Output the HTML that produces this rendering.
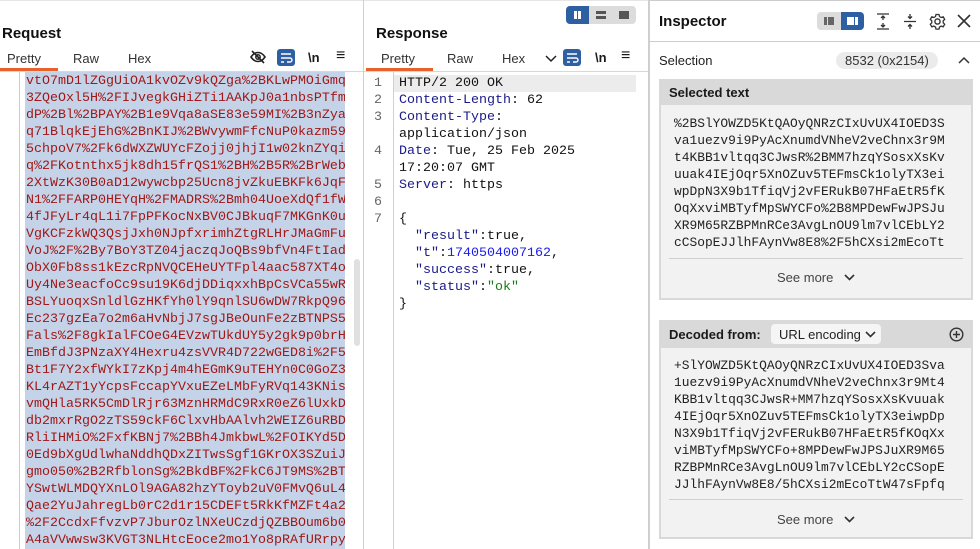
<!DOCTYPE html>
<html><head><meta charset="utf-8">
<style>
*{box-sizing:border-box;margin:0;padding:0}
body{width:980px;height:549px;overflow:hidden;background:#fff;font-family:"Liberation Sans","DejaVu Sans",sans-serif;position:relative;color:#1a1a1a}
.abs{position:absolute}
.title{font-weight:bold;font-size:15px;color:#111}
.tab{font-size:13px;color:#333;top:51px}
.mono{font-family:"Liberation Mono","DejaVu Sans Mono",monospace;font-size:13.33px;line-height:17px;white-space:pre}
.req{left:25px;top:72px;width:320px;background:#c5d3e8;color:#a01818;padding-left:1px;overflow:hidden;height:477px}
.resp{white-space:normal}
.resp div{height:17px;white-space:pre}
.k{color:#1a1a8a}
.sec{border:2px solid #d9d9d9;background:#f3f2f3}
.sechd{background:#d9d9d9;height:24px;font-size:13px;font-weight:bold;padding:4px 0 0 8px}
.seemore{font-size:13px;color:#444}
</style></head><body>
<div class="abs" style="left:0;top:0;width:980px;height:1px;background:#e6e6e6"></div>
<!-- request panel -->
<div class="abs title" style="left:2px;top:25px">Request</div>
<div class="abs tab" style="left:7px">Pretty</div>
<div class="abs tab" style="left:73px">Raw</div>
<div class="abs tab" style="left:128px">Hex</div>
<div class="abs" style="left:0;top:68px;width:58px;height:3px;background:#e8602c"></div>
<div class="abs" style="left:0;top:71px;width:363px;height:1px;background:#d8d8d8"></div>
<svg class="abs" style="left:249px;top:49px" width="18" height="16" viewBox="0 0 18 16"><path d="M2 8c2-3 4.5-4.5 7-4.5S14 5 16 8c-2 3-4.5 4.5-7 4.5S4 11 2 8z" fill="none" stroke="#222" stroke-width="1.6"/><circle cx="9" cy="8" r="2.2" fill="none" stroke="#222" stroke-width="1.5"/><path d="M3 2l12 12" stroke="#222" stroke-width="1.6"/></svg>
<div class="abs" style="left:277px;top:49px;width:18px;height:17px;background:#2f5fa3;border-radius:3px"></div>
<svg class="abs" style="left:277px;top:49px" width="18" height="17"><path d="M4 5h10M4 9h9a2 2 0 010 4h-3M4 13h3" stroke="#fff" stroke-width="1.4" fill="none"/></svg>
<div class="abs" style="left:308px;top:50px;font-size:13px;font-weight:bold">\n</div>
<div class="abs" style="left:336px;top:47px;font-size:16px">≡</div>
<div class="abs req mono"><div style="height:1px;overflow:hidden"> </div>vtO7mD1lZGgUiOA1kvOZv9kQZga%2BKLwPMOiGmq
3ZQeOxl5H%2FIJvegkGHiZTi1AAKpJ0a1nbsPTfm
dP%2Bl%2BPAY%2B1e9Vqa8aSE83e59MI%2B3nZya
q71BlqkEjEhG%2BnKIJ%2BWvywmFfcNuP0kazm59
5chpoV7%2Fk6dWXZWUYcFZojj0jhjI1w02knZYqi
q%2FKotnthx5jk8dh15frQS1%2BH%2B5R%2BrWeb
2XtWzK30B0aD12wywcbp25Ucn8jvZkuEBKFk6JqF
N1%2FFARP0HEYqH%2FMADRS%2Bmh04UoeXdQf1fW
4fJFyLr4qL1i7FpPFKocNxBV0CJBkuqF7MKGnK0u
VgKCFzkWQ3QsjJxh0NJpfxrimhZtgRLHrJMaGmFu
VoJ%2F%2By7BoY3TZ04jaczqJoQBs9bfVn4FtIad
ObX0Fb8ss1kEzcRpNVQCEHeUYTFpl4aac587XT4o
Uy4Ne3eacfoCc9su19K6djDDiqxxhBpCsVCa55wR
BSLYuoqxSnldlGzHKfYh0lY9qnlSU6wDW7RkpQ96
Ec237gzEa7o2m6aHvNbjJ7sgJBeOunFe2zBTNPS5
Fals%2F8gkIalFCOeG4EVzwTUkdUY5y2gk9p0brH
EmBfdJ3PNzaXY4Hexru4zsVVR4D722wGED8i%2F5
Bt1F7Y2xfWYkI7zKpj4m4hEGmK9uTEHYn0C0GoZ3
KL4rAZT1yYcpsFccapYVxuEZeLMbFyRVq143KNis
vmQHla5RK5CmDlRjr63MznHRMdC9RxR0eZ6lUxkD
db2mxrRgO2zTS59ckF6ClxvHbAAlvh2WEIZ6uRBD
RliIHMiO%2FxfKBNj7%2BBh4JmkbwL%2FOIKYd5D
0Ed9bXgUdlwhaNddhQDxZITwsSgf1GKrOX3SZuiJ
gmo050%2B2RfblonSg%2BkdBF%2FkC6JT9MS%2BT
YSwtWLMDQYXnLOl9AGA82hzYToyb2uV0FMvQ6uL4
Qae2YuJahregLb0rC2d1r15CDEFt5RkKfMZFt4a2
%2F2CcdxFfvzvP7JburOzlNXeUCzdjQZBBOum6b0
A4aVVwwsw3KVGT3NLHtcEoce2mo1Yo8pRAfURrpy</div>
<div class="abs" style="left:19px;top:72px;width:1px;height:477px;background:#ccc"></div>
<div class="abs" style="left:354px;top:259px;width:6px;height:87px;background:#e0e0e0;border-radius:3px"></div>
<div class="abs" style="left:363px;top:0;width:1px;height:549px;background:#d0d0d0"></div>
<!-- response panel -->
<div class="abs" style="left:566px;top:6px;width:70px;height:18px;background:#dcdcdc;border-radius:4px;overflow:hidden">
 <div style="position:absolute;left:0;top:0;width:23px;height:18px;background:#2f5fa3"></div>
 <div style="position:absolute;left:8px;top:5px;width:3px;height:8px;background:#fff"></div><div style="position:absolute;left:12px;top:5px;width:3px;height:8px;background:#fff"></div>
 <div style="position:absolute;left:30px;top:5px;width:10px;height:3px;background:#555"></div><div style="position:absolute;left:30px;top:10px;width:10px;height:3px;background:#555"></div>
 <div style="position:absolute;left:53px;top:5px;width:10px;height:8px;background:#555"></div>
</div>
<div class="abs title" style="left:376px;top:25px">Response</div>
<div class="abs tab" style="left:381px">Pretty</div>
<div class="abs tab" style="left:447px">Raw</div>
<div class="abs tab" style="left:502px">Hex</div>
<svg class="abs" style="left:545px;top:55px" width="12" height="8"><path d="M1 1l5 5 5-5" stroke="#222" stroke-width="1.5" fill="none"/></svg>
<div class="abs" style="left:563px;top:49px;width:18px;height:17px;background:#2f5fa3;border-radius:3px"></div>
<svg class="abs" style="left:563px;top:49px" width="18" height="17"><path d="M4 5h10M4 9h9a2 2 0 010 4h-3M4 13h3" stroke="#fff" stroke-width="1.4" fill="none"/></svg>
<div class="abs" style="left:595px;top:50px;font-size:13px;font-weight:bold">\n</div>
<div class="abs" style="left:621px;top:47px;font-size:16px">≡</div>
<div class="abs" style="left:366px;top:68px;width:67px;height:3px;background:#e8602c"></div>
<div class="abs" style="left:364px;top:71px;width:284px;height:1px;background:#d8d8d8"></div>
<div class="abs" style="left:393px;top:72px;width:1px;height:477px;background:#d0d0d0"></div>
<div class="abs" style="left:394px;top:75px;width:242px;height:17px;background:#ececec"></div>
<div class="abs mono resp" style="left:374px;top:75px;color:#666;width:14px"><div>1</div><div>2</div><div>3</div><div></div><div>4</div><div></div><div>5</div><div>6</div><div>7</div></div>
<div class="abs mono resp" style="left:399px;top:75px;color:#111"><div>HTTP/2 200 OK</div><div><span class="k">Content-Length</span>: 62</div><div><span class="k">Content-Type</span>:</div><div>application/json</div><div><span class="k">Date</span>: Tue, 25 Feb 2025</div><div>17:20:07 GMT</div><div><span class="k">Server</span>: https</div><div></div><div>{</div><div>  <span class="k">"result"</span>:true,</div><div>  <span class="k">"t"</span>:<span style="color:#1a1aee">1740504007162</span>,</div><div>  <span class="k">"success"</span>:true,</div><div>  <span class="k">"status"</span>:<span style="color:#1a7a1a">"ok"</span></div><div>}</div></div>
<div class="abs" style="left:648px;top:0;width:2px;height:549px;background:#cfcfcf"></div>
<!-- inspector -->
<div class="abs" style="left:650px;top:0;width:330px;height:1px;background:#ccc"></div>
<div class="abs title" style="left:659px;top:13px">Inspector</div>
<div class="abs" style="left:817px;top:12px;width:47px;height:18px;background:#dcdcdc;border-radius:4px;overflow:hidden">
 <div style="position:absolute;left:7px;top:5px;width:3px;height:8px;background:#666"></div><div style="position:absolute;left:11px;top:5px;width:6px;height:8px;background:#666"></div>
 <div style="position:absolute;left:24px;top:0;width:23px;height:18px;background:#2f5fa3"></div>
 <div style="position:absolute;left:30px;top:5px;width:7px;height:8px;background:#fff"></div><div style="position:absolute;left:38px;top:5px;width:3px;height:8px;background:#fff"></div>
</div>
<svg class="abs" style="left:876px;top:13px" width="14" height="17"><path d="M1 1h12M1 16h12M7 4v3M5 5l2-2 2 2M7 13v-3M5 12l2 2 2-2" stroke="#333" stroke-width="1.3" fill="none"/></svg>
<svg class="abs" style="left:903px;top:13px" width="14" height="17"><path d="M1 8.5h12M7 1v4M5 3.5l2 2 2-2M7 16v-4M5 13.5l2-2 2 2" stroke="#333" stroke-width="1.3" fill="none"/></svg>
<svg class="abs" style="left:929px;top:13px" width="17" height="17" viewBox="0 0 17 17"><circle cx="8.5" cy="8.5" r="2.6" fill="none" stroke="#333" stroke-width="1.4"/><path d="M7 1.5h3l.5 2 1.7 1 2-.7 1.5 2.6-1.5 1.4v2l1.5 1.4-1.5 2.6-2-.7-1.7 1-.5 2H7l-.5-2-1.7-1-2 .7-1.5-2.6 1.5-1.4v-2L1.3 6.4l1.5-2.6 2 .7 1.7-1z" fill="none" stroke="#333" stroke-width="1.3"/></svg>
<svg class="abs" style="left:957px;top:14px" width="14" height="14"><path d="M1 1l12 12M13 1L1 13" stroke="#333" stroke-width="1.6"/></svg>
<div class="abs" style="left:650px;top:41px;width:330px;height:1px;background:#ccc"></div>
<div class="abs" style="left:659px;top:53px;font-size:13px;color:#222">Selection</div>
<div class="abs" style="left:836px;top:52px;height:17px;padding:1px 9px;background:#ebebeb;border-radius:9px;font-size:13px;color:#333">8532 (0x2154)</div>
<svg class="abs" style="left:958px;top:56px" width="12" height="8"><path d="M1 7l5-5 5 5" stroke="#333" stroke-width="1.5" fill="none"/></svg>
<!-- selected text -->
<div class="abs sec" style="left:659px;top:79px;width:314px;height:221px">
 <div class="sechd">Selected text</div>
 <div class="mono" style="position:absolute;left:13px;top:34px;color:#222;font-size:12.9px">%2BSlYOWZD5KtQAOyQNRzCIxUvUX4IOED3S
va1uezv9i9PyAcXnumdVNheV2veChnx3r9M
t4KBB1vltqq3CJwsR%2BMM7hzqYSosxXsKv
uuak4IEjOqr5XnOZuv5TEFmsCk1olyTX3ei
wpDpN3X9b1TfiqVj2vFERukB07HFaEtR5fK
OqXxviMBTyfMpSWYCFo%2B8MPDewFwJPSJu
XR9M65RZBPMnRCe3AvgLnOU9lm7vlCEbLY2
cCSopEJJlhFAynVw8E8%2F5hCXsi2mEcoTt</div>
 <div style="position:absolute;left:8px;top:177px;width:294px;height:1px;background:#d0d0d0"></div>
 <div class="seemore" style="position:absolute;left:116px;top:189px">See more</div>
 <svg style="position:absolute;left:183px;top:193px" width="11" height="7"><path d="M1 1l4.5 4.5L10 1" stroke="#333" stroke-width="1.6" fill="none"/></svg>
</div>
<!-- decoded -->
<div class="abs sec" style="left:659px;top:320px;width:314px;height:219px">
 <div class="sechd" style="height:26px;padding-top:5px">Decoded from:</div>
 <div style="position:absolute;left:110px;top:2px;width:110px;height:20px;background:#f5f5f5;border-radius:4px;font-size:13px;padding:3px 0 0 8px;color:#222">URL encoding</div>
 <svg style="position:absolute;left:204px;top:9px" width="11" height="7"><path d="M1 1l4.5 4.5L10 1" stroke="#333" stroke-width="1.6" fill="none"/></svg>
 <svg style="position:absolute;left:288px;top:5px" width="15" height="15"><circle cx="7.5" cy="7.5" r="6.3" fill="none" stroke="#333" stroke-width="1.4"/><path d="M7.5 4v7M4 7.5h7" stroke="#333" stroke-width="1.4"/></svg>
 <div class="mono" style="position:absolute;left:13px;top:35px;color:#222;font-size:12.9px">+SlYOWZD5KtQAOyQNRzCIxUvUX4IOED3Sva
1uezv9i9PyAcXnumdVNheV2veChnx3r9Mt4
KBB1vltqq3CJwsR+MM7hzqYSosxXsKvuuak
4IEjOqr5XnOZuv5TEFmsCk1olyTX3eiwpDp
N3X9b1TfiqVj2vFERukB07HFaEtR5fKOqXx
viMBTyfMpSWYCFo+8MPDewFwJPSJuXR9M65
RZBPMnRCe3AvgLnOU9lm7vlCEbLY2cCSopE
JJlhFAynVw8E8/5hCXsi2mEcoTtW47sFpfq</div>
 <div style="position:absolute;left:8px;top:177px;width:294px;height:1px;background:#d0d0d0"></div>
 <div class="seemore" style="position:absolute;left:116px;top:190px">See more</div>
 <svg style="position:absolute;left:183px;top:194px" width="11" height="7"><path d="M1 1l4.5 4.5L10 1" stroke="#333" stroke-width="1.6" fill="none"/></svg>
</div>
</body></html>
